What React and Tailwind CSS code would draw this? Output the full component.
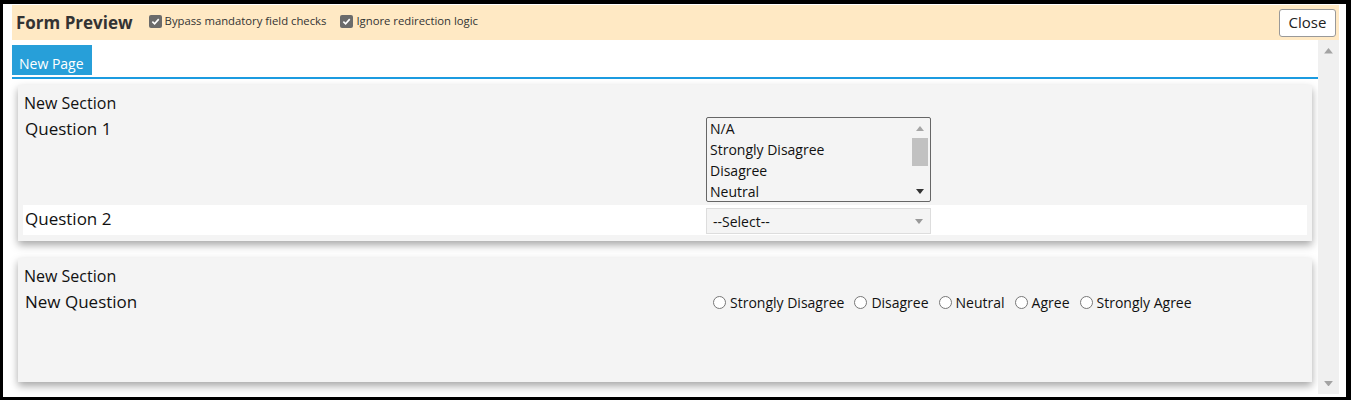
import React from "react";

const font = { fontFamily: '"Segoe UI", "Open Sans", "Noto Sans", sans-serif' };

const LIKERT = ["Strongly Disagree", "Disagree", "Neutral", "Agree", "Strongly Agree"];
const Q1_OPTIONS = ["N/A", "Strongly Disagree", "Disagree", "Neutral"];

function Check({ label }) {
  return (
    <label className="flex items-center gap-[3px] text-[11.3px] text-[#333]">
      <span className="w-[13px] h-[13px] rounded-[2px] bg-[#6b6b6b] flex items-center justify-center">
        <svg width="9" height="9" viewBox="0 0 10 10">
          <path d="M1.5 5.2 L4 7.6 L8.6 2.4" fill="none" stroke="white" strokeWidth="1.8" />
        </svg>
      </span>
      {label}
    </label>
  );
}

function Triangle({ up, color, size = 8 }) {
  return (
    <svg width={size} height={size / 2 + 1} viewBox="0 0 8 5">
      <path d={up ? "M0 5 L4 0 L8 5 Z" : "M0 0 L4 5 L8 0 Z"} fill={color} />
    </svg>
  );
}

function ListBox() {
  return (
    <div className="relative w-[225px] h-[85px] mt-[2px] border border-[#666] rounded-[2px] bg-[#f4f4f4] overflow-hidden">
      <div className="pl-[3px] text-[14px] leading-[21px] text-[#111]">
        {Q1_OPTIONS.map(o => <div key={o}>{o}</div>)}
      </div>
      {/* listbox scrollbar */}
      <div className="absolute right-[1px] top-0 bottom-0 w-[18px] flex flex-col items-center">
        <div className="h-[20px] flex items-center justify-center"><Triangle up color="#a6a6a6" /></div>
        <div className="w-[16px] h-[28px] bg-[#c1c1c1]" />
        <div className="flex-1" />
        <div className="h-[20px] flex items-center justify-center"><Triangle color="#333" /></div>
      </div>
    </div>
  );
}

function Card({ children, className = "" }) {
  return (
    <div className={"ml-[6px] mr-[6px] bg-[#f4f4f4] pt-[6px] px-[5px] pb-[6px] shadow-[0_4px_8px_rgba(0,0,0,0.35)] " + className}>
      {children}
    </div>
  );
}

export default function App() {
  return (
    <div
      className="w-[1351px] h-[400px] bg-white border-l-[3px] border-t-[4px] border-r-[5px] border-b-[3px] border-black pl-[9px] pr-[7px] pt-[1px] flex flex-col"
      style={font}
    >
      {/* header bar */}
      <div className="h-[35px] shrink-0 bg-[#ffe9c4] flex items-center pl-[4px] pr-[3px]">
        <div className="text-[17px] font-bold text-[#333] mr-[16px]">Form Preview</div>
        <div className="flex items-center gap-[14px] -mt-[3px]">
          <Check label="Bypass mandatory field checks" />
          <Check label="Ignore redirection logic" />
        </div>
        <button className="ml-auto w-[57px] h-[28px] bg-white border border-[#999] rounded-[3px] text-[15px] text-[#222]">
          Close
        </button>
      </div>

      <div className="flex flex-1 min-h-0">
        <div className="flex-1 min-w-0">
          {/* page tabs */}
          <div className="pt-[5px]">
            <div className="w-[80px] h-[30px] bg-[#279fd9] text-white text-[14px] pl-[7px] flex items-end pb-[1px]">New Page</div>
            <div className="mt-[2px] h-[2px] bg-[#1b9be0]" />
          </div>

          <div className="mt-[6px]">
            <Card>
              <div className="pl-[1px] h-[24px] text-[16px] leading-[24px] text-[#111]">New Section</div>
              <div className="flex h-[90px]">
                <div className="w-[683px] pl-[2px] pt-[2px] text-[17px] leading-[24px] text-[#111]">Question 1</div>
                <ListBox />
              </div>
              <div className="flex items-center h-[30px] bg-white">
                <div className="w-[683px] pl-[2px] -mt-[2px] text-[17px] leading-[24px] text-[#111]">Question 2</div>
                <div className="w-[225px] h-[26px] mt-[2px] bg-[#f4f4f4] border border-[#ddd] flex items-center justify-between pl-[6px] pr-[7px] text-[14px] text-[#111]">
                  --Select--
                  <Triangle color="#999" />
                </div>
              </div>
            </Card>

            <Card className="mt-[17px] h-[124px]">
              <div className="pl-[1px] h-[24px] text-[16px] leading-[24px] text-[#111]">New Section</div>
              <div className="flex pt-[2px]">
                <div className="w-[683px] pl-[2px] text-[17px] leading-[24px] text-[#111]">New Question</div>
                <div className="flex items-center pl-[7px] gap-[10px] text-[14px] text-[#111]">
                  {LIKERT.map(o => (
                    <label key={o} className="flex items-center gap-[4px]">
                      <span className="w-[13px] h-[13px] rounded-full border border-[#777] bg-white" />
                      {o}
                    </label>
                  ))}
                </div>
              </div>
            </Card>
          </div>
        </div>

        {/* page scrollbar */}
        <div className="w-[21px] shrink-0 bg-[#f0f0f0] mb-[3px] flex flex-col items-center justify-between py-[8px]">
          <Triangle up color="#a3a3a3" size={9} />
          <Triangle color="#a3a3a3" size={9} />
        </div>
      </div>
    </div>
  );
}
